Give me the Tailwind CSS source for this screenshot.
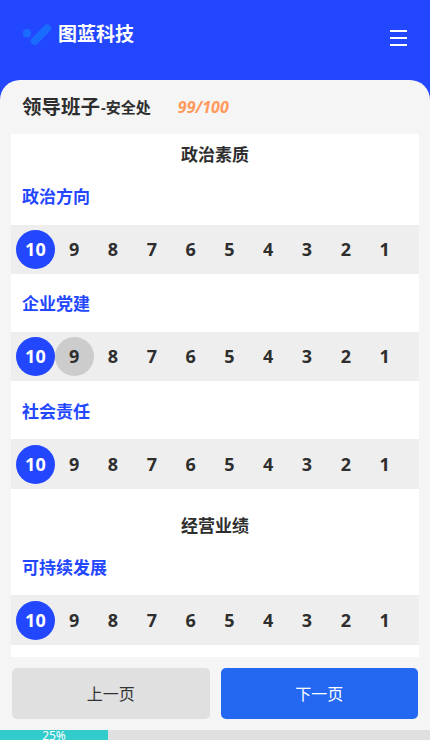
<!DOCTYPE html>
<html lang="zh">
<head>
<meta charset="utf-8">
<script src="https://cdn.jsdelivr.net/npm/@tailwindcss/browser@4"></script>
</head>
<body class="m-0 bg-[#f5f5f5]">
<div class="relative w-[430px] h-[740px] overflow-hidden bg-[#2347ff] font-['Noto_Sans','Noto_Sans_CJK_SC',sans-serif] text-[#2e2e2e]">
  <header class="h-[80px] flex items-start justify-between pl-[22px] pr-[23px]">
    <div class="flex items-center gap-[7px] pt-[20px]">
      <svg width="29" height="28" viewBox="0 0 29 28"><circle cx="5" cy="13.3" r="4.2" fill="#1a6cff"/><path d="M12.7 21 L25 8.5" stroke="#1a6cff" stroke-width="8" stroke-linecap="round" fill="none"/></svg>
      <span class="text-white text-[19px] font-bold leading-[26px]">图蓝科技</span>
    </div>
    <div class="flex flex-col gap-[5px] w-[17px] pt-[30px]">
      <span class="h-[2px] bg-white"></span><span class="h-[2px] bg-white"></span><span class="h-[2px] bg-white"></span>
    </div>
  </header>
  <main class="h-[660px] bg-[#f5f5f5] rounded-t-[20px] flex flex-col">
    <div class="h-[54px] pl-[22px] flex items-center">
      <span class="text-[19.5px] font-bold leading-[28px]">领导班子</span><span class="text-[15px] font-bold leading-[28px] pl-[1px]">-安全处</span>
      <span class="ml-[27px] text-[16px] font-bold italic text-[#ff9a5c]">99/100</span>
    </div>
    <div class="mx-[11px] h-[523px] bg-white">
      <div class="h-[42px] flex items-center justify-center text-[17px] font-bold">政治素质</div>
      <div class="h-[49px] pb-[7px] pl-[11px] flex items-center text-[17px] font-bold text-[#2347ff]">政治方向</div>
      <div class="h-[49px] bg-[#eeeeee] pl-[5px] flex items-center text-[18px] font-bold">
        <span class="w-[38.8px] h-[39px] rounded-full bg-[#2347ff] text-white flex items-center justify-center">10</span>
        <span class="w-[38.8px] h-[39px] rounded-full flex items-center justify-center">9</span>
        <span class="w-[38.8px] h-[39px] rounded-full flex items-center justify-center">8</span>
        <span class="w-[38.8px] h-[39px] rounded-full flex items-center justify-center">7</span>
        <span class="w-[38.8px] h-[39px] rounded-full flex items-center justify-center">6</span>
        <span class="w-[38.8px] h-[39px] rounded-full flex items-center justify-center">5</span>
        <span class="w-[38.8px] h-[39px] rounded-full flex items-center justify-center">4</span>
        <span class="w-[38.8px] h-[39px] rounded-full flex items-center justify-center">3</span>
        <span class="w-[38.8px] h-[39px] rounded-full flex items-center justify-center">2</span>
        <span class="w-[38.8px] h-[39px] rounded-full flex items-center justify-center">1</span>
      </div>
      <div class="h-[58px] pt-[2px] pl-[11px] flex items-center text-[17px] font-bold text-[#2347ff]">企业党建</div>
      <div class="h-[49px] bg-[#eeeeee] pl-[5px] flex items-center text-[18px] font-bold">
        <span class="w-[38.8px] h-[39px] rounded-full bg-[#2347ff] text-white flex items-center justify-center">10</span>
        <span class="w-[38.8px] h-[39px] rounded-full bg-[#cccccc] flex items-center justify-center">9</span>
        <span class="w-[38.8px] h-[39px] rounded-full flex items-center justify-center">8</span>
        <span class="w-[38.8px] h-[39px] rounded-full flex items-center justify-center">7</span>
        <span class="w-[38.8px] h-[39px] rounded-full flex items-center justify-center">6</span>
        <span class="w-[38.8px] h-[39px] rounded-full flex items-center justify-center">5</span>
        <span class="w-[38.8px] h-[39px] rounded-full flex items-center justify-center">4</span>
        <span class="w-[38.8px] h-[39px] rounded-full flex items-center justify-center">3</span>
        <span class="w-[38.8px] h-[39px] rounded-full flex items-center justify-center">2</span>
        <span class="w-[38.8px] h-[39px] rounded-full flex items-center justify-center">1</span>
      </div>
      <div class="h-[58px] pt-[3px] pl-[11px] flex items-center text-[17px] font-bold text-[#2347ff]">社会责任</div>
      <div class="h-[50px] bg-[#eeeeee] pl-[5px] flex items-center text-[18px] font-bold">
        <span class="w-[38.8px] h-[39px] rounded-full bg-[#2347ff] text-white flex items-center justify-center">10</span>
        <span class="w-[38.8px] h-[39px] rounded-full flex items-center justify-center">9</span>
        <span class="w-[38.8px] h-[39px] rounded-full flex items-center justify-center">8</span>
        <span class="w-[38.8px] h-[39px] rounded-full flex items-center justify-center">7</span>
        <span class="w-[38.8px] h-[39px] rounded-full flex items-center justify-center">6</span>
        <span class="w-[38.8px] h-[39px] rounded-full flex items-center justify-center">5</span>
        <span class="w-[38.8px] h-[39px] rounded-full flex items-center justify-center">4</span>
        <span class="w-[38.8px] h-[39px] rounded-full flex items-center justify-center">3</span>
        <span class="w-[38.8px] h-[39px] rounded-full flex items-center justify-center">2</span>
        <span class="w-[38.8px] h-[39px] rounded-full flex items-center justify-center">1</span>
      </div>
      <div class="h-[58px] pt-[16px] flex items-center justify-center text-[17px] font-bold">经营业绩</div>
      <div class="h-[48px] pb-[6px] pl-[11px] flex items-center text-[17px] font-bold text-[#2347ff]">可持续发展</div>
      <div class="h-[50px] bg-[#eeeeee] pl-[5px] flex items-center text-[18px] font-bold">
        <span class="w-[38.8px] h-[39px] rounded-full bg-[#2347ff] text-white flex items-center justify-center">10</span>
        <span class="w-[38.8px] h-[39px] rounded-full flex items-center justify-center">9</span>
        <span class="w-[38.8px] h-[39px] rounded-full flex items-center justify-center">8</span>
        <span class="w-[38.8px] h-[39px] rounded-full flex items-center justify-center">7</span>
        <span class="w-[38.8px] h-[39px] rounded-full flex items-center justify-center">6</span>
        <span class="w-[38.8px] h-[39px] rounded-full flex items-center justify-center">5</span>
        <span class="w-[38.8px] h-[39px] rounded-full flex items-center justify-center">4</span>
        <span class="w-[38.8px] h-[39px] rounded-full flex items-center justify-center">3</span>
        <span class="w-[38.8px] h-[39px] rounded-full flex items-center justify-center">2</span>
        <span class="w-[38.8px] h-[39px] rounded-full flex items-center justify-center">1</span>
      </div>
    </div>
    <div class="flex gap-[11px] px-[12px] pt-[11px]">
      <button class="w-[198px] h-[51px] rounded-[5px] bg-[#e0e0e0] text-[16px] text-[#333]">上一页</button>
      <button class="w-[198px] h-[51px] rounded-[5px] bg-[#2468f2] text-[16px] text-white">下一页</button>
    </div>
    <div class="mt-[11px] h-[10px] bg-[#e0e0e0]">
      <div class="w-[108px] h-[10px] bg-[#33cccc] text-white text-[12px] leading-[11px] text-center">25%</div>
    </div>
  </main>
</div>
</body>
</html>
